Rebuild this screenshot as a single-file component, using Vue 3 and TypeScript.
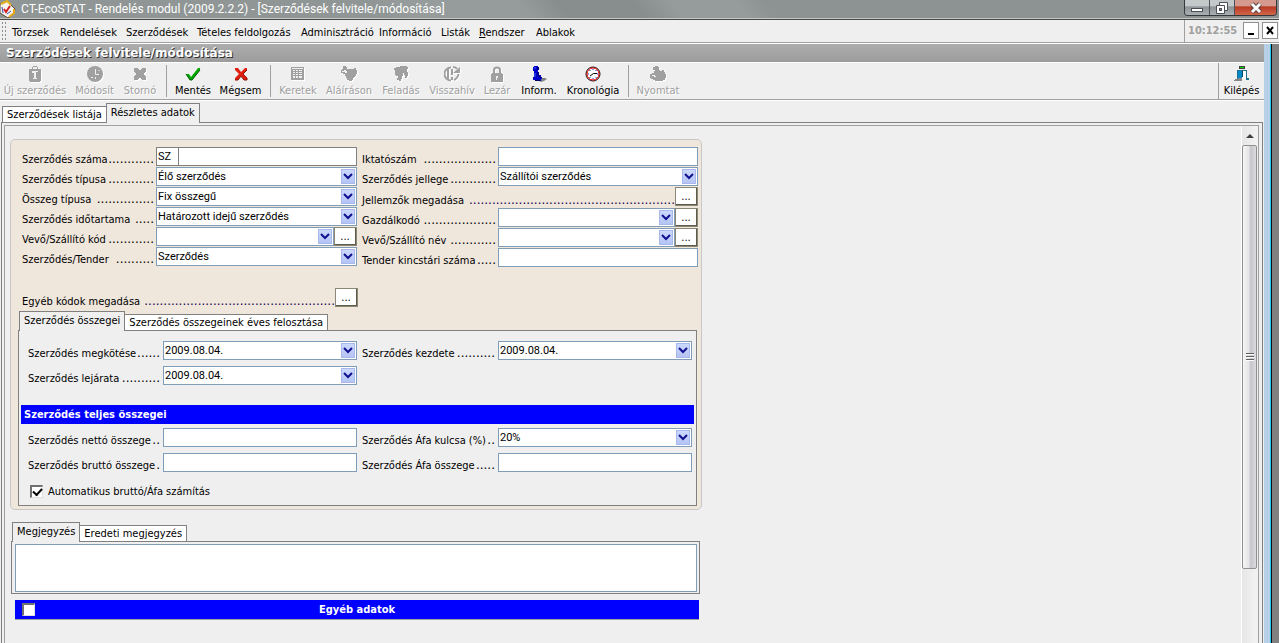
<script setup lang="ts">
import { ref } from 'vue'

interface Tool {
  label: string
  icon: string
  enabled?: boolean
}

interface Field {
  id: string
  label: string
  dots: number
  kind: 'text' | 'select' | 'prefix' | 'none'
  value?: string
  more?: boolean
}

const menus = [
  'Törzsek', 'Rendelések', 'Szerződések', 'Tételes feldolgozás', 'Adminisztráció',
  'Információ', 'Listák', 'Rendszer', 'Ablakok',
]

const tools: (Tool | null)[] = [
  { label: 'Új szerződés', icon: 'new' },
  { label: 'Módosít', icon: 'modify' },
  { label: 'Stornó', icon: 'cancel' },
  null,
  { label: 'Mentés', icon: 'save', enabled: true },
  { label: 'Mégsem', icon: 'discard', enabled: true },
  null,
  { label: 'Keretek', icon: 'frames' },
  { label: 'Aláíráson', icon: 'sign' },
  { label: 'Feladás', icon: 'post' },
  { label: 'Visszahív', icon: 'recall' },
  { label: 'Lezár', icon: 'lock' },
  { label: 'Inform.', icon: 'info', enabled: true },
  { label: 'Kronológia', icon: 'clock', enabled: true },
  null,
  { label: 'Nyomtat', icon: 'print' },
]

const headColumns: Field[][] = [
  [
    { id: 'szam', label: 'Szerződés száma', dots: 12, kind: 'prefix', value: 'SZ' },
    { id: 'tipus', label: 'Szerződés típusa', dots: 12, kind: 'select', value: 'Élő szerződés' },
    { id: 'osszegtipus', label: 'Összeg típusa', dots: 15, kind: 'select', value: 'Fix összegű' },
    { id: 'idotartam', label: 'Szerződés időtartama', dots: 5, kind: 'select', value: 'Határozott idejű szerződés' },
    { id: 'vevokod', label: 'Vevő/Szállító kód', dots: 12, kind: 'select', value: '', more: true },
    { id: 'tender', label: 'Szerződés/Tender', dots: 10, kind: 'select', value: 'Szerződés' },
  ],
  [
    { id: 'iktato', label: 'Iktatószám', dots: 19, kind: 'text' },
    { id: 'jelleg', label: 'Szerződés jellege', dots: 12, kind: 'select', value: 'Szállítói szerződés' },
    { id: 'jellemzok', label: 'Jellemzők megadása', dots: 54, kind: 'none', more: true },
    { id: 'gazdalkodo', label: 'Gazdálkodó', dots: 19, kind: 'select', value: '', more: true },
    { id: 'vevonev', label: 'Vevő/Szállító név', dots: 12, kind: 'select', value: '', more: true },
    { id: 'kincstari', label: 'Tender kincstári száma', dots: 5, kind: 'text' },
  ],
]

const dateColumns: Field[][] = [
  [
    { id: 'megkotes', label: 'Szerződés megkötése', dots: 6, kind: 'select', value: '2009.08.04.' },
    { id: 'lejarat', label: 'Szerződés lejárata', dots: 10, kind: 'select', value: '2009.08.04.' },
  ],
  [{ id: 'kezdet', label: 'Szerződés kezdete', dots: 10, kind: 'select', value: '2009.08.04.' }],
]

const sumColumns: Field[][] = [
  [
    { id: 'netto', label: 'Szerződés nettó összege', dots: 2, kind: 'text' },
    { id: 'brutto', label: 'Szerződés bruttó összege', dots: 1, kind: 'text' },
  ],
  [
    { id: 'afakulcs', label: 'Szerződés Áfa kulcsa (%)', dots: 2, kind: 'select', value: '20%' },
    { id: 'afa', label: 'Szerződés Áfa összege', dots: 5, kind: 'text' },
  ],
]

const prefix = ref('SZ')
const autoCalc = ref(true)
const otherData = ref(false)
const note = ref('')
const dotted = (n: number): string => '.'.repeat(n)
</script>

<template>
  <div class="window">
    <header class="titlebar">
      <svg class="app-icon" viewBox="0 0 16 18" aria-hidden="true">
        <path d="M0 4 L7 1 L15 9 L14 13 L8 18 L0 13 Z" fill="#f7f3ee" stroke="#5a4a35" stroke-width="1" />
        <path d="M1 4 L7 1 L11 5" fill="none" stroke="#e0b020" stroke-width="2" />
        <path d="M14 9 L14 13 L9 17" fill="none" stroke="#e8a818" stroke-width="2" />
        <path d="M4 9 L6 12 L10 6" fill="none" stroke="#d02020" stroke-width="2" />
        <path d="M2 7 L3 13 M7 14 L11 11" fill="none" stroke="#3050b0" stroke-width="1" />
      </svg>
      <h1 class="title">CT-EcoSTAT - Rendelés modul (2009.2.2.2) - [Szerződések felvitele/módosítása]</h1>
      <div class="window-buttons">
        <button class="wb" aria-label="Kis méret">
          <svg width="12" height="12" viewBox="0 0 12 12"><rect x="0.5" y="6.5" width="11" height="3" fill="#fff" stroke="#4a4f55" /></svg>
        </button>
        <button class="wb" aria-label="Előző méret">
          <svg width="12" height="12" viewBox="0 0 12 12">
            <path d="M3.5 0.5H11.5V8.5H3.5Z" fill="#fff" stroke="#4a4f55" />
            <path d="M0.5 3.5H8.5V11.5H0.5Z" fill="#fff" stroke="#4a4f55" />
            <rect x="3.5" y="6.5" width="2" height="2" fill="#888" stroke="#4a4f55" />
          </svg>
        </button>
        <button class="wb wb-close" aria-label="Bezárás">
          <svg width="12" height="12" viewBox="0 0 12 12">
            <path d="M2 2L10 10M10 2L2 10" stroke="#54413f" stroke-width="5" />
            <path d="M2 2L10 10M10 2L2 10" stroke="#fff" stroke-width="3" />
          </svg>
        </button>
      </div>
    </header>

    <div class="menubar">
      <span class="grip"></span>
      <nav class="menus">
        <button v-for="m in menus" :key="m" class="menu">
          <template v-if="m === 'Rendszer'"><u>R</u>endszer</template>
          <template v-else>{{ m }}</template>
        </button>
      </nav>
      <div class="clock-area">
        <time class="clock">10:12:55</time>
        <button class="mdi-button" aria-label="Ablak kis méret">
          <svg width="10" height="10" viewBox="0 0 10 10"><rect x="2" y="8" width="6" height="2" fill="#000" /></svg>
        </button>
        <button class="mdi-button" aria-label="Ablak bezárása">
          <svg width="10" height="10" viewBox="0 0 10 10"><path d="M2 2L8 9M8 2L2 9" stroke="#000" stroke-width="2" /></svg>
        </button>
      </div>
    </div>

    <div class="workspace">
      <main class="child">
        <h2 class="caption">Szerződések felvitele/módosítása</h2>

        <div class="toolbar">
          <div class="tools">
            <template v-for="(t, i) in tools" :key="i">
              <span v-if="!t" class="separator"></span>
              <button v-else class="tool" :disabled="!t.enabled">
                <svg class="tool-icon" viewBox="0 0 16 16" aria-hidden="true">
                  <g v-if="t.icon === 'new'" fill="#a0a0a0">
                    <path d="M2 3H5V1H6V0H10V1H11V3H14V15H13V16H3V15H2Z" />
                    <path d="M6 1H10V3H6ZM5 5H11V6H9V12H10V13H6V12H7V7H5Z" fill="#efefef" />
                  </g>
                  <g v-else-if="t.icon === 'modify'">
                    <circle cx="8" cy="8" r="8" fill="#a0a0a0" />
                    <path d="M8.5 3V8.5H12M4 11.5H6M11.5 4.5H12.5M8.500 11V13" fill="none" stroke="#efefef" />
                  </g>
                  <path v-else-if="t.icon === 'cancel'" d="M2 2H6V3H7V4H9V3H10V2H14V6H13V7H12V9H13V10H14V14H10V13H9V12H7V13H6V14H2V10H3V9H4V7H3V6H2Z" fill="#a0a0a0" />
                  <g v-else-if="t.icon === 'save'">
                    <path d="M1 8H4L6 11L13 2H15V4L7 14H5Z" fill="#00a800" />
                    <path d="M1 8L5 14H7L15 4" fill="none" stroke="#005c00" />
                  </g>
                  <g v-else-if="t.icon === 'discard'">
                    <path d="M2 2H5L8 6L12 2H14V4L10 8L14 12V14H11L8 10L5 14H2V12L6 8L2 4Z" fill="#e02010" />
                    <path d="M14 4L10 8L14 12V14H11L8 10L5 14H2" fill="none" stroke="#900c00" />
                  </g>
                  <g v-else-if="t.icon === 'frames'">
                    <path d="M1 1H14V14H1Z" fill="#a0a0a0" />
                    <path d="M3 4H12V5H3ZM3 6H12V7H3ZM3 8H12V9H3ZM3 10H12V12H3ZM2 2H13V3H2Z" fill="#efefef" />
                    <path d="M5 4H6V12H5ZM8 4H9V12H8Z" fill="#a0a0a0" />
                  </g>
                  <g v-else-if="t.icon === 'sign'" fill="#a0a0a0">
                    <path d="M2 0H5V1H6V3H13V2H15V4H16V8H15V10H14V11H13V12H12V14H11V15H8V14H6V12H5V10H4V8H2V7H0V4H1V3H2Z" />
                    <path d="M1 5H3V4H5V5H6V7H4V6H1Z" fill="#efefef" />
                  </g>
                  <path v-else-if="t.icon === 'post'" d="M1 2H3V1H7V0H14V1H15V3H14V6H15V10H14V12H12V9H11V7H10V10H9V13H8V15H6V14H4V12H5V10H3V9H2V4H1Z" fill="#a0a0a0" />
                  <g v-else-if="t.icon === 'recall'" fill="none" stroke="#a0a0a0">
                    <path d="M7 1.500A6.500 6.500 0 0 0 7 14.500M10 14Q14 12 14.500 8M9 1Q12 1 13 3" stroke-width="2" />
                    <path d="M4 2V13" stroke-width="2" />
                    <path d="M8 3V9M8 11V14" stroke-width="2" />
                    <path d="M9 7H16V1Z" fill="#a0a0a0" stroke="none" />
                  </g>
                  <g v-else-if="t.icon === 'lock'">
                    <path d="M5 8V4Q5 1.500 8 1.500T11 4V8" fill="none" stroke="#a0a0a0" stroke-width="2" />
                    <path d="M3 7H13V8H14V16H2V8H3Z" fill="#a0a0a0" />
                    <path d="M7 10H9V12H8V14H7Z" fill="#efefef" />
                  </g>
                  <g v-else-if="t.icon === 'info'">
                    <path d="M8 15L10 12H14L16 13L13 15L10 16Z" fill="#808080" />
                    <path d="M3 0H7V1H8V4H7V6H8V9H10V11H11V13H10V15H4V14H2V11H3V5H2V1H3Z" fill="#0000c8" />
                    <path d="M7 1V4M7 6V9L10 12M4 14.500H9" fill="none" stroke="#000050" />
                    <path d="M4 1V3M4 7V11" stroke="#3868ff" />
                  </g>
                  <g v-else-if="t.icon === 'clock'">
                    <circle cx="8" cy="8" r="7" fill="#fff" stroke="#200000" stroke-width="1" />
                    <circle cx="8" cy="8" r="6" fill="none" stroke="#e00000" stroke-width="1" />
                    <path d="M8 3V4M8 12V13M3 8H4M12 8H13M5 4V5M11 4V5M5 11V12M11 11V12" stroke="#2038c0" />
                    <path d="M12 7.500H8.500L5 10" fill="none" stroke="#000" />
                  </g>
                  <g v-else-if="t.icon === 'print'" fill="#a0a0a0">
                    <path d="M3 1H5V0H8V1H9V4H10V5H12V4H14V6H15V8H16V12H15V14H13V15H5V14H3V13H1V12H0V8H2V7H4V5H5V4H3Z" />
                    <path d="M2 9H5V10H6V11H4V10H2Z" fill="#efefef" />
                  </g>
                </svg>
                <span>{{ t.label }}</span>
              </button>
            </template>
          </div>
          <div class="exit">
            <button class="tool">
              <svg class="tool-icon" viewBox="0 0 16 16" aria-hidden="true">
                <path d="M5 0H11V3H5Z" fill="#404040" />
                <path d="M6 1H10V2H6Z" fill="#00e000" />
                <path d="M3 4H13V12H15V14H12V6H8V14H3Z" fill="#207090" />
                <path d="M4 5H8V14H4Z" fill="#0088c8" />
                <path d="M8 5H12V13H8Z" fill="#fff" />
                <path d="M8 5H9V11H8Z" fill="#004868" />
                <path d="M0 14H1V13H4V12H8V15H0Z" fill="#888" />
                <path d="M4 5H7V12H4Z" fill="#0088c8" />
              </svg>
              <span>Kilépés</span>
            </button>
          </div>
        </div>

        <div class="tabs page-tabs" role="tablist">
          <button class="tab" role="tab" aria-selected="false">Szerződések listája</button>
          <button class="tab active" role="tab" aria-selected="true">Részletes adatok</button>
        </div>

        <section class="page">
          <div class="page-inner">
            <form class="content" @submit.prevent>
              <div class="group">
                <div class="fields head-fields">
                  <div v-for="(col, c) in headColumns" :key="c" class="column">
                    <div v-for="f in col" :key="f.id" class="field" :class="{ wide: f.kind === 'none' }">
                      <label :for="f.id" class="label">{{ f.label }}<span class="leader">{{ dotted(f.dots) }}</span></label>
                      <div class="control">
                        <template v-if="f.kind === 'prefix'">
                          <input v-model="prefix" class="box prefix" aria-label="Előtag">
                          <input :id="f.id" class="box number">
                        </template>
                        <input v-else-if="f.kind === 'text'" :id="f.id" class="box">
                        <span v-else-if="f.kind === 'select'" class="combo">
                          <select :id="f.id" class="box"><option>{{ f.value }}</option></select>
                          <svg class="arrow" viewBox="0 0 12 13" aria-hidden="true"><path d="M2 4L6 8L10 4" /></svg>
                        </span>
                        <button v-if="f.more" :id="f.kind === 'none' ? f.id : undefined" class="more" type="button" :aria-label="f.label">...</button>
                      </div>
                    </div>
                  </div>
                </div>

                <div class="field wide other-codes">
                  <label for="kodok" class="label">Egyéb kódok megadása<span class="leader">{{ dotted(50) }}</span></label>
                  <button id="kodok" class="more" type="button">...</button>
                </div>

                <div class="tabs" role="tablist">
                  <button class="tab active" type="button" role="tab" aria-selected="true">Szerződés összegei</button>
                  <button class="tab" type="button" role="tab" aria-selected="false">Szerződés összegeinek éves felosztása</button>
                </div>
                <div class="panel">
                  <div v-for="(set, s) in [dateColumns, sumColumns]" :key="s">
                    <h3 v-if="s === 1" class="bar">Szerződés teljes összegei</h3>
                    <div class="fields sum-fields">
                      <div v-for="(col, c) in set" :key="c" class="column">
                        <div v-for="f in col" :key="f.id" class="field">
                          <label :for="f.id" class="label">{{ f.label }}<span class="leader">{{ dotted(f.dots) }}</span></label>
                          <div class="control">
                            <input v-if="f.kind === 'text'" :id="f.id" class="box">
                            <span v-else class="combo">
                              <select :id="f.id" class="box"><option>{{ f.value }}</option></select>
                              <svg class="arrow" viewBox="0 0 12 13" aria-hidden="true"><path d="M2 4L6 8L10 4" /></svg>
                            </span>
                          </div>
                        </div>
                      </div>
                    </div>
                  </div>
                  <label class="check-row"><input v-model="autoCalc" type="checkbox" class="check">Automatikus bruttó/Áfa számítás</label>
                </div>
              </div>

              <div class="notes">
                <div class="tabs" role="tablist">
                  <button class="tab active" type="button" role="tab" aria-selected="true">Megjegyzés</button>
                  <button class="tab" type="button" role="tab" aria-selected="false">Eredeti megjegyzés</button>
                </div>
                <div class="note-panel">
                  <textarea v-model="note" class="note" aria-label="Megjegyzés"></textarea>
                </div>
                <label class="bar other-bar">
                  <input v-model="otherData" type="checkbox" class="check">
                  <span>Egyéb adatok</span>
                </label>
              </div>
            </form>

            <div class="scrollbar">
              <span class="scroll-up"></span>
              <span class="thumb"><i></i><i></i><i></i></span>
            </div>
          </div>
        </section>
      </main>
      <div class="frame-edge"></div>
    </div>
  </div>
</template>

<style>
body {
  margin: 0;
  background: #efefef;
}
</style>

<style scoped>
.window {
  display: flex;
  flex-direction: column;
  min-height: 100vh;
  color: #000;
  background: #efefef;
  font: 11px/13px "DejaVu Sans Condensed", "DejaVu Sans", sans-serif;
}
.window * {
  box-sizing: border-box;
}
button {
  margin: 0;
  padding: 0;
  border: 0;
  background: none;
  color: inherit;
  font: inherit;
  white-space: nowrap;
}
h1, h2, h3 {
  margin: 0;
}

.titlebar {
  display: flex;
  align-items: flex-start;
  height: 20px;
  padding-right: 2px;
  border-bottom: 1px solid #484848;
  box-shadow: inset 0 -1px #c4c8c6;
  background: linear-gradient(50deg, #8f9695 0 30%, #959c9b 32% 41%, #878e8d 44% 50%, #959c9b 53% 58%, #8c9392 60% 100%);
}
.app-icon {
  width: 16px;
  height: 18px;
  margin-right: 5px;
}
.title {
  flex: 1;
  color: #fff;
  font: 12px/19px Roboto, "Noto Sans", sans-serif;
  white-space: nowrap;
}
.window-buttons {
  display: flex;
  height: 16px;
  border: 1px solid #33383b;
  border-top: 0;
  border-radius: 0 0 4px 4px;
  overflow: hidden;
}
.wb {
  display: flex;
  align-items: center;
  justify-content: center;
  width: 25px;
  border-right: 1px solid #4c5255;
  background: linear-gradient(#c3c8c9 0 40%, #8d9497 45%, #a9b0b2);
}
.wb-close {
  width: 41px;
  border-right: 0;
  background: linear-gradient(#d49a8e 0 40%, #b83a22 45%, #d2654a);
}

.menubar {
  display: flex;
  align-items: stretch;
  height: 24px;
  border-bottom: 1px solid #fff;
  box-shadow: inset 0 -1px #a0a0a0;
}
.grip {
  width: 6px;
  margin: 1px 5px 2px 1px;
  background: radial-gradient(circle, #8c8c8c 1px, transparent 1px) 0 0 / 3px 4px;
}
.menus {
  display: grid;
  grid-template-columns: 48px 66px 71px 104px 78px 62px 38px 57px 50px;
  flex: 1;
}
.menu {
  padding-top: 1px;
  text-align: left;
}
.clock-area {
  display: flex;
  align-items: center;
  gap: 3px;
  margin-bottom: 1px;
  padding: 0 1px 2px 3px;
  border-left: 1px solid #a0a0a0;
}
.clock {
  width: 52px;
  color: #a0a0a0;
  font-weight: bold;
}
.mdi-button {
  display: flex;
  align-items: center;
  justify-content: center;
  width: 16px;
  height: 17px;
  border: 1px solid #909090;
  background: #fff;
}

.workspace {
  display: flex;
  flex: 1;
}
.child {
  display: flex;
  flex: 1;
  flex-direction: column;
  min-width: 0;
}
.frame-edge {
  width: 15px;
  background: linear-gradient(90deg, #b8cfe8 0 6px, #20c8f8 6px 7px, #101010 7px 8px, #808080 8px);
}
.caption {
  padding-left: 6px;
  background: linear-gradient(#adadad, #9c9c9c);
  color: #fff;
  font: bold 12px/18px "DejaVu Sans", sans-serif;
  text-shadow: 1px 1px 0 #303030;
}

.toolbar {
  display: flex;
  justify-content: space-between;
  height: 39px;
  border-top: 1px solid #fff;
  border-bottom: 1px solid #fff;
  box-shadow: inset 0 -1px #a0a0a0;
}
.tools {
  display: grid;
  grid-template-columns: 70px 49px 42px 10px 44px 51px 9px 46px 56px 48px 54px 36px 48px 60px 10px 50px;
}
.tool {
  display: flex;
  flex-direction: column;
  align-items: center;
  padding-top: 3px;
}
.tool span {
  margin-top: 2px;
}
.tool-icon {
  width: 16px;
  height: 16px;
}
.tool:disabled {
  color: #a0a0a0;
  text-shadow: 1px 1px 0 #fff;
}
.tool:disabled .tool-icon {
  filter: drop-shadow(1px 1px 0 #fff);
}
.separator {
  width: 1px;
  height: 32px;
  margin: 2px auto 0;
  background: #a0a0a0;
}
.exit {
  display: flex;
  justify-content: center;
  width: 46px;
  margin-bottom: 1px;
  border-left: 1px solid #a0a0a0;
}

.tabs {
  display: flex;
  align-items: flex-end;
  padding-left: 1px;
}
.tab {
  height: 16px;
  padding: 0 4px;
  border: 1px solid #808080;
  border-bottom: 0;
  border-left: 0;
  background: #fff;
}
.tab.active {
  z-index: 1;
  height: 20px;
  margin-bottom: -1px;
  padding: 0 4px 2px;
  border-left: 1px solid #808080;
  background: #efefef;
}
.page-tabs {
  padding: 2px 0 0 2px;
}
.page-tabs .tab {
  border-left: 1px solid #808080;
}
.page-tabs .tab + .tab {
  margin-left: -1px;
}

.page {
  display: flex;
  flex: 1;
  margin: 0 1px;
  padding: 2px 3px 0 2px;
  border: 1px solid #808080;
  border-bottom: 0;
}
.page-inner {
  display: flex;
  flex: 1;
  padding-right: 1px;
  border: 1px solid #a0a0a0;
  border-bottom: 0;
}
.content {
  flex: 1;
  padding: 13px 0 23px 5px;
}
.group {
  width: 692px;
  padding: 7px 4px 3px 7px;
  border: 1px solid #c8c8c8;
  border-radius: 5px;
  background: #efe6dc;
}
.fields {
  display: grid;
}
.head-fields {
  grid-template-columns: 335px 336px;
  gap: 5px;
  padding-left: 4px;
}
.head-fields .column {
  display: flex;
  flex-direction: column;
  gap: 1px;
}
.field {
  display: grid;
  grid-template-columns: 134px 1fr;
  min-height: 19px;
}
.field.wide {
  grid-template-columns: 1fr 23px;
  min-height: 20px;
}
.column + .column > .field {
  grid-template-columns: 136px 1fr;
}
.column + .column > .field.wide {
  grid-template-columns: 1fr 23px;
}
.label {
  display: flex;
  align-items: baseline;
  align-self: end;
  padding-right: 2px;
  white-space: nowrap;
}
.leader {
  flex: 1;
  font: 12px/12px "DejaVu Sans", sans-serif;
  text-align: right;
}
.wide .label {
  padding-right: 0;
}
.wide .leader {
  color: #200050;
}
.control {
  display: flex;
}
.box {
  flex: 1;
  width: 100%;
  min-width: 0;
  height: 19px;
  margin: 0;
  padding: 0 1px 1px;
  border: 1px solid #7f9db9;
  border-radius: 0;
  outline: 0;
  appearance: none;
  background: #fff;
  color: #000;
  font: 11px/15px Roboto, "Liberation Sans", sans-serif;
}
.prefix {
  flex: 0 0 23px;
  border-color: #808080;
}
.number {
  border-color: #808080;
  border-left: 0;
}
.combo {
  display: grid;
  flex: 1;
}
.combo > * {
  grid-area: 1 / 1;
}
.arrow {
  justify-self: end;
  width: 14px;
  height: 15px;
  margin: 2px 2px 0 0;
  border: 1px solid #a8b8ec;
  background: linear-gradient(#ccd8fc, #b4c4f4);
  fill: none;
  stroke: #101090;
  stroke-width: 2;
  pointer-events: none;
}
.more {
  width: 23px;
  height: 19px;
  border: 1px solid #e8e4d8;
  border-right: 2px solid #5c5a48;
  border-bottom: 2px solid #5c5a48;
  outline: 1px solid #8c8878;
  outline-offset: -1px;
  background: #fff;
}
.other-codes {
  width: 336px;
  margin: 21px 0 3px 4px;
}

.panel {
  padding: 10px 2px 7px;
  border: 1px solid #808080;
  background: #efefef;
}
.sum-fields {
  grid-template-columns: 329px 330px;
  gap: 5px;
  padding-left: 7px;
}
.sum-fields .column {
  display: flex;
  flex-direction: column;
  gap: 6px;
}
.sum-fields .field {
  grid-template-columns: 135px 1fr;
}
.sum-fields .label {
  padding-right: 3px;
}
.bar {
  margin: 20px 0 4px;
  padding-left: 3px;
  background: #0000ff;
  color: #fff;
  font: bold 11px/19px "DejaVu Sans Condensed", sans-serif;
}
.check-row {
  display: flex;
  align-items: center;
  gap: 5px;
  width: max-content;
  margin: 13px 0 0 9px;
}
.check {
  display: grid;
  place-items: center;
  width: 13px;
  height: 13px;
  margin: 0;
  border: 1px solid #e0e0e0;
  border-top: 2px solid #707070;
  border-left: 2px solid #707070;
  appearance: none;
  background: #fff;
}
.check:checked::before {
  width: 7px;
  height: 4px;
  margin-bottom: 2px;
  border: solid #000;
  border-width: 0 0 2px 2px;
  content: "";
  transform: rotate(-48deg);
}

.notes {
  width: 689px;
  margin: 12px 0 0 1px;
}
.note-panel {
  padding: 2px 2px 1px 3px;
  border: 1px solid #808080;
}
.note {
  display: block;
  width: 100%;
  height: 48px;
  border: 1px solid #7f9db9;
  border-radius: 0;
  outline: 0;
  resize: none;
  background: #fff;
  font: 11px/13px Roboto, "Liberation Sans", sans-serif;
}
.other-bar {
  display: grid;
  grid-template-columns: 13px 1fr 13px;
  align-items: center;
  margin: 6px 1px 0 4px;
  padding: 0 7px;
  border-bottom: 1px solid #a0a0a0;
  text-align: center;
}

.scrollbar {
  display: flex;
  flex-direction: column;
  align-items: center;
  width: 16px;
  border-left: 1px solid #fff;
  background: linear-gradient(90deg, #e6e6e6, #f2f2f2);
}
.scroll-up {
  margin: 8px 0 7px;
  border: 4px solid transparent;
  border-top: 0;
  border-bottom-color: #404040;
}
.thumb {
  display: flex;
  flex-direction: column;
  align-items: center;
  justify-content: center;
  gap: 1px;
  width: 15px;
  flex: 0 1 424px;
  border: 1px solid #909090;
  border-radius: 2px;
  background: linear-gradient(90deg, #f6f6f6, #e4e4e6 45%, #c6c6ca 60%, #dcdce0);
}
.thumb i {
  width: 8px;
  height: 2px;
  background: #606060;
  border-bottom: 1px solid #fff;
}
</style>
